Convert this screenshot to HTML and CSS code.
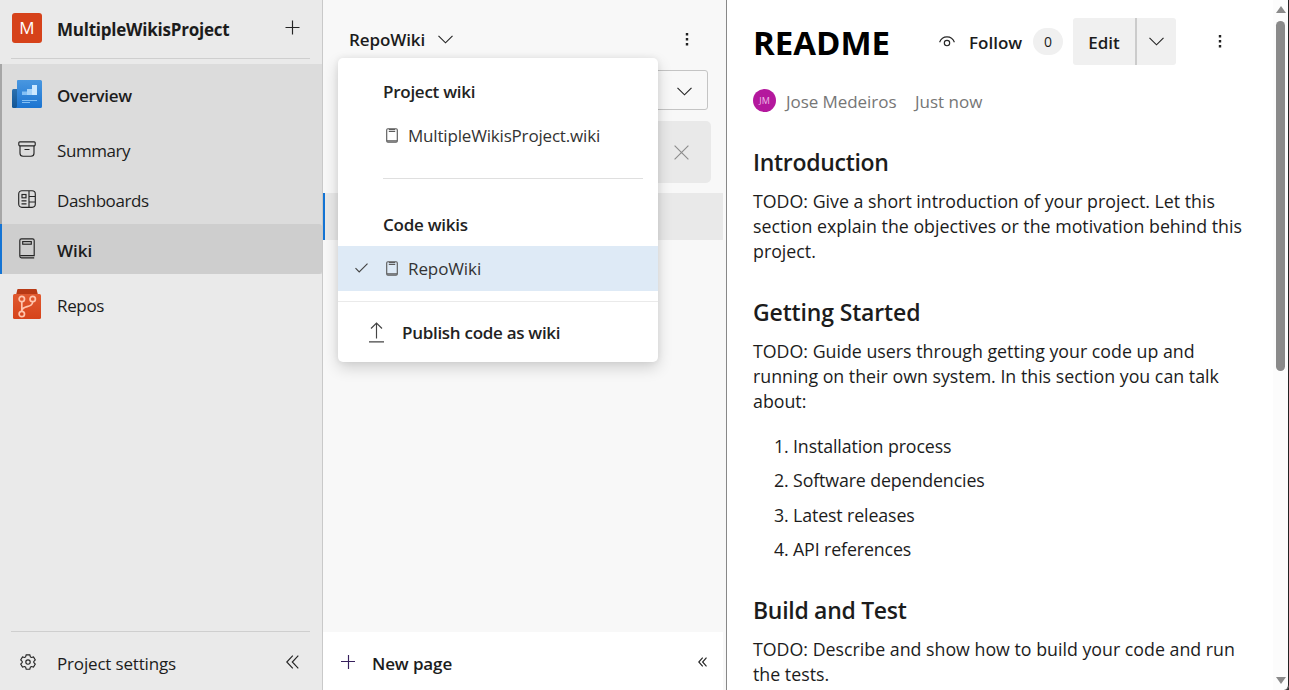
FILE: index.html
```html
<!DOCTYPE html>
<html lang="en">
<head>
<meta charset="utf-8">
<title>RepoWiki</title>
<link rel="stylesheet" href="styles.css">
</head>
<body>
<div class="app">
  <nav class="sidebar">
    <header class="project">
      <span class="project-logo">M</span>
      <span class="project-name">MultipleWikisProject</span>
      <svg class="plus" width="15" height="15" viewBox="0 0 15 15"><path d="M7.500 .5v14M.5 7.500h14"/></svg>
    </header>
    <div class="group">
      <a class="item item-top"><span class="ico">
        <svg width="30" height="28" viewBox="0 0 30 28"><defs><linearGradient id="ov" x1="0" y1="0" x2="0" y2="1"><stop offset="0" stop-color="#4997e0"/><stop offset="1" stop-color="#1b74d1"/></linearGradient><linearGradient id="ob" x1="0" y1="0" x2="0" y2="1"><stop offset="0" stop-color="#2a70b0"/><stop offset="1" stop-color="#135594"/></linearGradient></defs><path d="M5 9H1.500Q0 9 0 10.500V26.500Q0 28 1.500 28H7V9z" fill="url(#ob)"/><path d="M6 0h22.500Q30 0 30 1.500v25Q30 28 28.500 28H3.500Q5 27.500 5 26V1Q5 0 6 0z" fill="url(#ov)"/><path d="M10 11.500h5V15h-5z" fill="#83c0f5"/><path d="M15 9h5v6h-5z" fill="#a5d3fa"/><path d="M20 5h5v10h-5z" fill="#cce8ff"/><path class="lines" d="M10 20.500h15M10 22.500h8"/></svg>
      </span><span class="label medium">Overview</span></a>
      <a class="item"><span class="ico">
        <svg width="18" height="16" viewBox="0 0 18 16"><rect x=".8" y=".8" width="16.400" height="4" rx="1"/><path d="M2 5v7.200Q2 15.200 5 15.200h8q3 0 3-3V5M6.500 8.500h5"/></svg>
      </span><span class="label tight">Summary</span></a>
      <a class="item"><span class="ico">
        <svg width="18" height="18" viewBox="0 0 18 18"><rect x=".7" y=".7" width="16.600" height="16.600" rx="3.200"/><path d="M11 1v16M11 6.500h6M11 12h6M3.500 10.800h5M3.500 13.800h5"/><rect x="4" y="4.500" width="4" height="3.300"/></svg>
      </span><span class="label tight">Dashboards</span></a>
      <a class="item item-active"><span class="ico">
        <svg width="16" height="21" viewBox="0 0 16 21"><path d="M.8 18.500V2.500Q.8 .8 2.500 .8h11q1.700 0 1.700 1.700V17.600H1.500M.8 18q0 1.800 1.700 1.800h12.700"/><rect x="3.700" y="3.600" width="8.600" height="2.600"/></svg>
      </span><span class="label wiki">Wiki</span></a>
    </div>
    <a class="item item-repos"><span class="ico">
      <svg width="28" height="30" viewBox="0 0 28 30"><defs><linearGradient id="rp" x1="0" y1="0" x2="0" y2="1"><stop offset="0" stop-color="#e05a30"/><stop offset="1" stop-color="#d6431a"/></linearGradient></defs><path d="M5 0h18q1 0 1 2l1 4H3l1-4q0-2 1-2z" fill="#b83a15"/><rect y="5" width="28" height="25" rx="1.500" fill="url(#rp)"/><g class="branch"><circle cx="8.800" cy="10" r="2.700"/><circle cx="19.700" cy="10" r="2.700"/><circle cx="8.800" cy="25" r="2.700"/><path d="M8.800 13v9M8.800 21.500q.5-2.500 4-3.500c4-1.200 6.500-1.500 6.900-5"/></g></svg>
    </span><span class="label snug">Repos</span></a>
    <footer class="settings">
      <span class="ico"><svg width="16" height="16" viewBox="0 0 16 16"><path d="M6.200 .8h3.600l.6 2.100 1 .6 2.100-.6 1.800 3-1.500 1.500v1.200l1.500 1.500-1.800 3-2.100-.6-1 .6-.6 2.100H6.200l-.6-2.100-1-.6-2.100.6-1.800-3 1.500-1.500V7.400L.7 5.900l1.800-3 2.100.6 1-.6z"/><circle cx="8" cy="8" r="2.200"/></svg></span>
      <span class="label">Project settings</span>
      <svg class="collapse" width="13" height="14" viewBox="0 0 13 14"><path d="M6.800 .7L.8 7l6 6.300M12.300 .7l-6 6.300 6 6.300"/></svg>
    </footer>
  </nav>

  <section class="tree">
    <header class="tree-head">
      <span class="wiki-name">RepoWiki</span>
      <svg class="chev" width="15" height="9" viewBox="0 0 15 9"><path d="M.5 .8l7 7 7-7"/></svg>
      <svg class="dots" width="4" height="13" viewBox="0 0 4 13"><path d="M.8 0h2.400v2.400H.8zM.8 5h2.400v2.400H.8zM.8 10h2.400v2.400H.8z"/></svg>
    </header>
    <div class="filter"><svg width="15" height="9" viewBox="0 0 15 9"><path d="M.5 .8l7 7 7-7"/></svg></div>
    <div class="notice"><svg width="15" height="15" viewBox="0 0 15 15"><path d="M.6 .6l13.800 13.800M14.400 .6L.6 14.400"/></svg></div>
    <div class="selected-page"></div>
    <footer class="new-page">
      <svg width="14" height="14" viewBox="0 0 14 14"><path class="violet" d="M7.500 0v14M0 6.500h14"/></svg>
      <span class="new-label">New page</span>
      <svg class="collapse-sm" width="9" height="10" viewBox="0 0 9 10"><path d="M4.700 .6L.8 5l3.900 4.400M8.500 .6L4.600 5l3.900 4.400"/></svg>
    </footer>
    <div class="menu">
      <div class="menu-title">Project wiki</div>
      <div class="menu-item"><svg class="book" width="12" height="15" viewBox="0 0 12 15"><rect x=".7" y=".7" width="10.600" height="13.400" rx="1.200"/><path d="M1 12.800h10M2.800 3.400h6.400M2.800 1.500h6.400"/></svg><span class="menu-text">MultipleWikisProject.wiki</span></div>
      <div class="menu-rule"></div>
      <div class="menu-title menu-title-code">Code wikis</div>
      <div class="menu-item menu-on"><svg class="check" width="13" height="10" viewBox="0 0 13 10"><path d="M.5 5.200l3.700 3.700L12.500 .6"/></svg><svg class="book" width="12" height="15" viewBox="0 0 12 15"><rect x=".7" y=".7" width="10.600" height="13.400" rx="1.200"/><path d="M1 12.800h10M2.800 3.400h6.400M2.800 1.500h6.400"/></svg><span class="menu-text">RepoWiki</span></div>
      <div class="publish"><svg width="15" height="21" viewBox="0 0 15 21"><path d="M7.500 16.500V1M2 6.500L7.500 1 13 6.500M0 19.800h15"/></svg><span class="publish-label">Publish code as wiki</span></div>
    </div>
  </section>

  <main class="page">
    <header class="page-head">
      <h1>README</h1>
      <svg class="eye" width="16" height="11" viewBox="0 0 16 11"><path d="M.6 6.200C3.300-1 12.700-1 15.400 6.200"/><circle cx="8" cy="7" r="2.700"/></svg>
      <span class="follow">Follow</span>
      <span class="count">0</span>
      <span class="edit"><span class="edit-main">Edit</span><span class="edit-more"><svg width="15" height="9" viewBox="0 0 15 9"><path d="M.5 .8l7 7 7-7"/></svg></span></span>
      <svg class="dots" width="4" height="13" viewBox="0 0 4 13"><path d="M.8 0h2.400v2.400H.8zM.8 5h2.400v2.400H.8zM.8 10h2.400v2.400H.8z"/></svg>
    </header>
    <div class="byline"><span class="avatar">JM</span><span class="author">Jose Medeiros</span><span>Just now</span></div>
    <article>
      <h2>Introduction</h2>
      <p>TODO: Give a short introduction of your project. Let this<br>section explain the objectives or the motivation behind this<br>project.</p>
      <h2 class="started">Getting Started</h2>
      <p class="lead-in">TODO: Guide users through getting your code up and<br>running on their own system. In this section you can talk<br>about:</p>
      <ol><li>Installation process</li><li>Software dependencies</li><li>Latest releases</li><li>API references</li></ol>
      <h2>Build and Test</h2>
      <p>TODO: Describe and show how to build your code and run<br>the tests.</p>
    </article>
  </main>
  <aside class="scroll"><svg width="10" height="7" viewBox="0 0 10 7"><path d="M5 0l5 7H0z"/></svg><span class="thumb"></span><svg class="down" width="10" height="7" viewBox="0 0 10 7"><path d="M5 7l5-7H0z"/></svg></aside>
</div>
</body>
</html>
```
FILE: styles.css
```css
* { box-sizing: border-box; }
body { margin: 0; font-family: "Open Sans", "Noto Sans", sans-serif; font-size: 17px; color: #1c1c1c; background: #333; overflow: hidden; white-space: nowrap; }
svg { display: block; flex: none; fill: none; stroke: #252525; stroke-width: 1.15; }
.app { display: flex; width: 1289px; height: 690px; background: #fff; border-bottom-right-radius: 5px; }

.sidebar { width: 323px; height: 690px; display: flex; flex-direction: column; background: #eaeaea; border-right: 1px solid #c9c9c9; }
.project { height: 59px; margin: 0 12px 5px 11px; padding-left: 1px; display: flex; align-items: center; border-bottom: 1px solid #cfcfcf; }
.project-logo { width: 30px; height: 30px; margin-bottom: 2px; border-radius: 3px; background: #d6421a; color: #fff; font-size: 17px; line-height: 30px; text-align: center; }
.project-name { margin-left: 15px; font-weight: 700; letter-spacing: -.23px; }
.project .plus { margin: 0 10px 4px auto; }
.group { height: 210px; background: #dcdcdc; border-left: 2px solid #a6a6a6; }
.item { display: flex; align-items: center; height: 50px; }
.item-top { height: 60px; }
.ico { width: 55px; display: flex; justify-content: center; padding-bottom: 2px; }
.group .ico { width: 50px; padding-bottom: 1px; }
.label { margin-left: 5px; padding-top: 1px; letter-spacing: -.17px; }
.group .label { padding-top: 3px; }
.medium { font-weight: 600; letter-spacing: -.27px; }
.wiki { font-weight: 600; letter-spacing: 0; }
.tight { letter-spacing: -.42px; }
.snug { letter-spacing: -.35px; }
.item-active { margin-left: -2px; border-left: 2px solid #1474d4; background: #cecece; border-radius: 0 3px 3px 0; }
.item-repos { height: 61px; }
.item-repos .ico { width: 53px; padding-bottom: 1px; }
.item-repos .label { margin-left: 4px; }
.item-repos svg, .item-top svg { stroke: none; }
.lines { stroke: #83c0f5; stroke-width: 1; }
.branch { fill: none; stroke: #ffc5ad; stroke-width: 1.7; }
.settings { height: 59px; margin: auto 12px 0 11px; display: flex; align-items: center; border-top: 1px solid #cfcfcf; padding-top: 4px; }
.settings .ico { width: 33px; }
.settings .label { margin-left: 13px; }
.collapse { margin: 0 11px 2px auto; }

.tree { position: relative; width: 404px; height: 690px; display: flex; flex-direction: column; background: #f8f8f8; border-right: 1px solid #888; }
.tree-head { height: 70px; padding: 9px 37px 0 26px; display: flex; align-items: center; }
.wiki-name { font-weight: 600; letter-spacing: -.1px; }
.chev { margin-left: 13px; margin-bottom: 1px; }
.dots { fill: #222; stroke: none; }
.tree-head .dots { margin-left: auto; }
.filter { height: 40px; margin: 0 18px 0 15px; border: 1px solid #c4c4c4; border-radius: 3px; display: flex; align-items: center; justify-content: flex-end; padding: 2px 15px 0 0; }
.notice { height: 62px; margin: 11px 15px 0; border-radius: 5px; background: #e9e9e9; display: flex; align-items: center; justify-content: flex-end; padding-right: 22px; }
.notice svg { stroke: #8c8c8c; }
.selected-page { height: 47px; margin: 10px 3px 0 0; background: #e9e9e9; border-left: 2px solid #1474d4; }
.new-page { height: 58px; margin: auto 3px 0 0; background: #fff; display: flex; align-items: center; padding: 5px 16px 0 18px; }
.new-page svg { margin-bottom: 4px; }
.violet { stroke: #37205d; }
.new-label { margin-left: 17px; font-weight: 600; letter-spacing: -.12px; }
.new-page .collapse-sm { margin-left: auto; }

.menu { position: absolute; left: 15px; top: 58px; width: 320px; height: 304px; background: #fff; border-radius: 5px; box-shadow: 0 6px 15px rgba(0,0,0,.16), 0 0 6px rgba(0,0,0,.07); color: #333; }
.menu svg { stroke: #444; }
.menu .book { stroke: #5c5c5c; margin-bottom: 1px; }
.menu-title { height: 55px; padding: 12px 0 0 45px; line-height: 43px; font-weight: 600; color: #222; letter-spacing: -.26px; }
.menu-item { height: 45px; display: flex; align-items: center; padding-left: 48px; letter-spacing: -.18px; }
.menu-text { margin-left: 10px; }
.menu-rule { height: 1px; margin: 20px 15px 0 45px; background: #dfdfdf; }
.menu-title-code { height: 67px; padding-top: 24px; }
.menu-on { background: #deeaf6; padding-left: 17px; letter-spacing: -.1px; }
.menu-on .check { margin-right: 18px; margin-bottom: 2px; }
.publish { height: 61px; margin-top: 10px; border-top: 1px solid #eaeaea; display: flex; align-items: center; padding-left: 31px; font-weight: 600; color: #222; letter-spacing: -.29px; }
.publish-label { margin-left: 18px; }

.page { width: 546px; height: 690px; padding-left: 26px; overflow: hidden; }
.page-head { height: 83px; display: flex; align-items: center; }
h1 { margin: 1px 0 0; width: 186px; font-size: 33px; line-height: 45px; font-weight: 700; color: #000; }
.follow { margin-left: 14px; width: 64px; padding-top: 1px; font-weight: 600; }
.count { width: 30px; height: 27px; line-height: 27px; border-radius: 14px; background: #f0f0f0; text-align: center; font-size: 14px; }
.edit { margin-left: 10px; display: flex; width: 103px; height: 47px; background: #f0f0f0; border-radius: 3px; font-weight: 600; }
.edit-main { width: 62px; text-align: center; line-height: 49px; }
.edit-more { width: 41px; border-left: 2px solid #cbcbcb; display: flex; align-items: center; justify-content: center; }
.page-head .dots { margin-left: 42px; }
.byline { height: 36px; display: flex; align-items: center; color: #767676; }
.avatar { width: 23px; height: 23px; border-radius: 50%; background: #b4189d; color: #eebbe6; font-size: 9px; line-height: 23px; text-align: center; margin-bottom: 2px; }
.author { width: 129px; margin-left: 10px; letter-spacing: -.06px; }
article { padding-top: 26px; line-height: 25px; font-size: 17.8px; }
h2 { margin: 0; height: 44px; font-size: 23px; line-height: 34px; font-weight: 600; letter-spacing: -.3px; }
.started { letter-spacing: -.15px; }
p { margin: 0; height: 106px; }
.lead-in { height: 95px; }
ol { margin: 0; padding: 0 0 0 40px; height: 159px; letter-spacing: -.12px; }
li { height: 34.4px; }
.scroll { width: 16px; height: 690px; background: #fcfcfc; border-right: 1px solid #222; display: flex; flex-direction: column; align-items: center; padding-top: 6px; border-bottom-right-radius: 5px; }
.scroll svg { fill: #8a8a8a; stroke: none; }
.thumb { width: 9px; height: 350px; margin-top: 8px; border-radius: 5px; background: #8a8a8a; }
.scroll .down { margin: auto 0 6px; }
```
